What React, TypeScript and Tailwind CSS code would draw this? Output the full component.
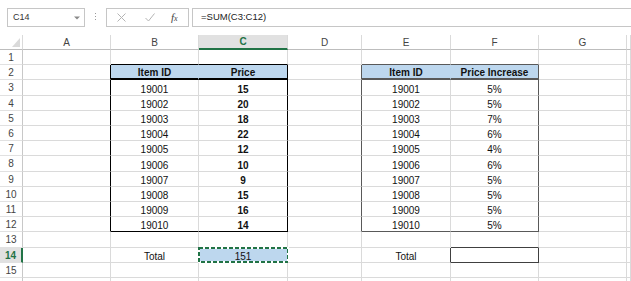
import React from "react"

const ROW_H = [15, 15, 16, 15, 15, 15, 15, 16, 15, 15, 15, 15, 16, 15, 15]
const COL_W = ["w-[23px]", "w-[88px]", "w-[88px]", "w-[89px]", "w-[74px]", "w-[89px]", "w-[88px]", "w-[88px]", "flex-1"]
const LETTERS = ["", "A", "B", "C", "D", "E", "F", "G", ""]

const ids = [19001, 19002, 19003, 19004, 19005, 19006, 19007, 19008, 19009, 19010]
const prices = [15, 20, 18, 22, 12, 10, 9, 15, 16, 14]
const incs = [5, 5, 7, 6, 4, 6, 5, 5, 5, 5]

function rightBorder(r: number, c: number) {
  if (r >= 2 && r <= 12) {
    if (c === 1 || c === 3) return "border-r-black"
    if (c === 4 || c === 6) return "border-r-[#595959]"
    if (r === 2 && (c === 2 || c === 5)) return "border-r-[#BDD7EE]"
  }
  if (r === 14 && (c === 5 || c === 6)) return "border-r-[#404040]"
  return "border-r-[#DADADA]"
}

function bottomBorder(r: number, c: number) {
  if ((r === 1 || r === 12) && (c === 2 || c === 3)) return "border-b border-b-black"
  if (r === 2 && (c === 2 || c === 3)) return "border-b-2 border-b-black"
  if ((r === 1 || r === 12) && (c === 5 || c === 6)) return "border-b border-b-[#595959]"
  if (r === 2 && (c === 5 || c === 6)) return "border-b-2 border-b-[#595959]"
  if ((r === 13 || r === 14) && c === 6) return "border-b border-b-[#404040]"
  return "border-b border-b-[#DADADA]"
}

function content(r: number, c: number): React.ReactNode {
  if (r === 2) {
    if (c === 2 || c === 5) return <span className="font-bold">Item ID</span>
    if (c === 3) return <span className="font-bold">Price</span>
    if (c === 6) return <span className="font-bold">Price Increase</span>
  }
  if (r >= 3 && r <= 12) {
    const i = r - 3
    if (c === 2 || c === 5) return ids[i]
    if (c === 3) return <span className="font-bold">{prices[i]}</span>
    if (c === 6) return `${incs[i]}%`
  }
  if (r === 14) {
    if (c === 2 || c === 5) return "Total"
    if (c === 3) return "151"
  }
  return null
}

function Selection() {
  return (
    <div className="absolute -left-[1px] -top-[1px] -right-[2px] -bottom-[1px] pointer-events-none">
      <svg width="100%" height="100%" className="absolute inset-0 overflow-visible">
        <rect x="1" y="1" width="calc(100% - 2px)" height="calc(100% - 2px)" fill="none" stroke="#ffffff" strokeWidth="2" />
        <rect x="1" y="1" width="calc(100% - 2px)" height="calc(100% - 2px)" fill="none" stroke="#217346" strokeWidth="2" strokeDasharray="4 2" />
      </svg>
      <div className="absolute -right-[1px] -bottom-[2px] w-[4px] h-[4px] bg-[#217346]" />
    </div>
  )
}

function Row({ r }: { r: number }) {
  const h = ROW_H[r - 1] === 16 ? "h-[16px]" : "h-[15px]"
  const sel = r === 14
  return (
    <div className={`flex ${h}`}>
      <div
        className={`shrink-0 w-[23px] flex items-center justify-center text-[10px] border-b border-b-[#E1E1E1] ${
          sel
            ? "bg-[#E1E1E1] text-[#217346] font-bold border-r-2 border-r-[#217346]"
            : "bg-white text-[#444] border-r border-r-[#C8C8C8]"
        }`}
      >
        {r}
      </div>
      {[1, 2, 3, 4, 5, 6, 7, 8].map((c) => {
        const blue = (r === 2 && (c === 2 || c === 3 || c === 5 || c === 6)) || (r === 14 && c === 3)
        return (
          <div
            key={c}
            className={`${COL_W[c]} ${c === 8 ? "" : "shrink-0"} relative flex items-end justify-center leading-[10px] text-[10px] text-[#111] border-r ${rightBorder(r, c)} ${bottomBorder(r, c)} ${
              blue ? "bg-[#BDD7EE]" : "bg-white"
            }`}
          >
            {content(r, c)}
            {r === 14 && c === 3 && <Selection />}
          </div>
        )
      })}
    </div>
  )
}

export default function App() {
  return (
    <div className="w-[631px] h-[281px] overflow-hidden bg-white font-['Liberation_Sans',Arial,sans-serif] select-none">
      {/* Formula bar */}
      <div className="h-[35px] flex items-start pt-[8px] pl-[7px]">
        <div className="w-[78px] h-[19px] border border-[#C6C6C6] flex items-center justify-between pl-[5px] pr-[4px] text-[9px] text-[#333]">
          <span>C14</span>
          <svg width="6" height="4" viewBox="0 0 6 4">
            <path d="M0 0.5 L6 0.5 L3 3.5 Z" fill="#8a8a8a" />
          </svg>
        </div>
        <div className="ml-[10px] mt-[5px] flex flex-col gap-[2px]">
          <div className="w-[1px] h-[1px] bg-[#9a9a9a]" />
          <div className="w-[1px] h-[1px] bg-[#9a9a9a]" />
          <div className="w-[1px] h-[1px] bg-[#9a9a9a]" />
        </div>
        <div className="ml-[10px] w-[83px] h-[19px] border border-[#C6C6C6] flex items-center pl-[10px]">
          <svg width="9" height="9" viewBox="0 0 9 9">
            <path d="M0.5 0.5 L8.5 8.5 M8.5 0.5 L0.5 8.5" stroke="#b4b4b4" strokeWidth="1" />
          </svg>
          <svg width="10" height="9" viewBox="0 0 10 9" className="ml-[19px]">
            <path d="M0.5 5 L3.5 8 L9.5 0.5" stroke="#b4b4b4" strokeWidth="1" fill="none" />
          </svg>
          <span className="ml-[16px] font-['Liberation_Serif',serif] italic text-[11px] text-[#444] leading-none">
            f<span className="text-[8px]">x</span>
          </span>
        </div>
        <div className="ml-[3px] flex-1 h-[19px] border border-r-0 border-[#C6C6C6] flex items-center pl-[8px] text-[9.5px] text-[#222]">
          =SUM(C3:C12)
        </div>
      </div>

      {/* Column headers */}
      <div className="flex h-[15px]">
        {LETTERS.map((l, c) => (
          <div
            key={c}
            className={`${COL_W[c]} ${c === 8 ? "" : "shrink-0"} relative flex items-center justify-center text-[10px] border-r border-r-[#DADADA] ${
              c === 3
                ? "bg-[#E1E1E1] text-[#217346] font-bold border-b-2 border-b-[#217346]"
                : "bg-white text-[#444] border-b border-b-[#BDBDBD]"
            }`}
          >
            {c === 0 ? (
              <svg width="8" height="9" viewBox="0 0 8 9" className="absolute right-[2px] bottom-[2px]">
                <path d="M8 0 L8 9 L0 9 Z" fill="#DADADA" />
              </svg>
            ) : (
              l
            )}
          </div>
        ))}
      </div>

      {/* Rows */}
      {ROW_H.map((_, i) => (
        <Row key={i} r={i + 1} />
      ))}

      {/* Top sliver of the next row */}
      <div className="flex h-[3px]">
        {COL_W.map((w, c) => (
          <div
            key={c}
            className={`${w} ${c === 8 ? "" : "shrink-0"} border-r ${c === 0 ? "border-r-[#C8C8C8]" : "border-r-[#DADADA]"}`}
          />
        ))}
      </div>
    </div>
  )
}
